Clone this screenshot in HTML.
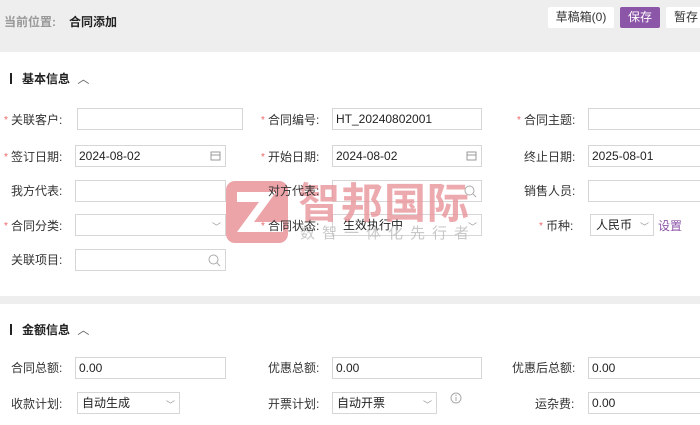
<!DOCTYPE html>
<html><head><meta charset="utf-8"><style>
*{margin:0;padding:0;box-sizing:border-box}
body{width:700px;height:425px;overflow:hidden;background:#fff;font-family:"Liberation Sans","Noto Sans CJK SC",sans-serif;font-size:12px;color:#333;position:relative}
.a{position:absolute}
.hdr{left:0;top:0;width:700px;height:52px;background:#eeeeee}
.btn{position:absolute;top:7px;height:21px;background:#fff;border-radius:2px;font-size:12px;line-height:21px;text-align:center;color:#333}
.band{left:0;top:296px;width:700px;height:8px;background:#eeeeee}
.lbl{position:absolute;font-size:12px;color:#333;line-height:14px;white-space:nowrap;z-index:3}
.req::before{content:"*";color:#e66;font-size:10px;position:absolute;left:-7px;top:1px}
.inp{position:absolute;height:22px;border:1px solid #d6d6d6;background:#fff;font-size:12px;line-height:20px;padding-left:3px;color:#222}
.sel{padding-left:10px}
.ttl{position:absolute;left:10px;font-weight:bold;font-size:12px;color:#222}
.ttl::before{content:"";display:inline-block;width:2px;height:11px;background:#222;margin-right:10px;vertical-align:-1px}
.ic{position:absolute;right:4px;top:4px}
</style></head><body>
<div class="a hdr"></div>
<div class="a" style="left:4px;top:13px;color:#999;font-weight:bold">当前位置:</div>
<div class="a" style="left:69px;top:13px;color:#222;font-weight:bold">合同添加</div>
<div class="btn" style="left:548px;width:66px">草稿箱(0)</div>
<div class="btn" style="left:620px;width:40px;background:#8b55a8;color:#fff">保存</div>
<div class="btn" style="left:666px;width:40px">暂存</div>

<div class="ttl" style="top:70px">基本信息 <span style="font-weight:normal;color:#666;margin-left:4px">︿</span></div>

<div class="lbl req" style="left:11px;top:113px">关联客户:</div>
<div class="inp" style="left:77px;top:108px;width:166px"></div>
<div class="lbl req" style="left:268px;top:113px">合同编号:</div>
<div class="inp" style="left:332px;top:108px;width:150px">HT_20240802001</div>
<div class="lbl req" style="left:524px;top:113px">合同主题:</div>
<div class="inp" style="left:588px;top:108px;width:120px"></div>

<div class="lbl req" style="left:11px;top:150px">签订日期:</div>
<div class="inp" style="left:75px;top:145px;width:151px">2024-08-02<svg class="ic" width="11" height="11" viewBox="0 0 11 11"><rect x="1" y="2" width="9" height="8" fill="none" stroke="#999"/><line x1="1" y1="5" x2="10" y2="5" stroke="#999"/></svg></div>
<div class="lbl req" style="left:268px;top:150px">开始日期:</div>
<div class="inp" style="left:332px;top:145px;width:150px">2024-08-02<svg class="ic" width="11" height="11" viewBox="0 0 11 11"><rect x="1" y="2" width="9" height="8" fill="none" stroke="#999"/><line x1="1" y1="5" x2="10" y2="5" stroke="#999"/></svg></div>
<div class="lbl" style="left:524px;top:150px">终止日期:</div>
<div class="inp" style="left:588px;top:145px;width:120px">2025-08-01</div>

<div class="lbl" style="left:11px;top:184px">我方代表:</div>
<div class="inp" style="left:75px;top:180px;width:151px"></div>
<div class="lbl" style="left:268px;top:184px">对方代表:</div>
<div class="inp" style="left:332px;top:180px;width:150px"><svg class="ic" width="13" height="13" viewBox="0 0 13 13"><circle cx="5.5" cy="5.5" r="4.5" fill="none" stroke="#aaa"/><line x1="9" y1="9" x2="12" y2="12" stroke="#aaa"/></svg></div>
<div class="lbl" style="left:524px;top:184px">销售人员:</div>
<div class="inp" style="left:588px;top:180px;width:120px"></div>

<div class="lbl req" style="left:11px;top:219px">合同分类:</div>
<div class="inp" style="left:75px;top:214px;width:151px"><span class="ic" style="color:#999;font-size:9px;top:2px">﹀</span></div>
<div class="lbl req" style="left:268px;top:219px">合同状态:</div>
<div class="inp sel" style="left:332px;top:214px;width:150px">生效执行中<span class="ic" style="color:#999;font-size:9px;top:2px">﹀</span></div>
<div class="lbl req" style="left:546px;top:219px">币种:</div>
<div class="inp sel" style="left:590px;top:214px;width:64px;padding-left:5px">人民币<span class="ic" style="color:#999;font-size:9px;top:2px">﹀</span></div>
<div class="lbl" style="left:658px;top:219px;color:#8b55a8">设置</div>

<div class="lbl" style="left:11px;top:253px">关联项目:</div>
<div class="inp" style="left:75px;top:249px;width:151px"><svg class="ic" width="13" height="13" viewBox="0 0 13 13"><circle cx="5.5" cy="5.5" r="4.5" fill="none" stroke="#aaa"/><line x1="9" y1="9" x2="12" y2="12" stroke="#aaa"/></svg></div>

<div class="a band"></div>
<div class="ttl" style="top:321px">金额信息 <span style="font-weight:normal;color:#666;margin-left:4px">︿</span></div>

<div class="lbl" style="left:11px;top:361px">合同总额:</div>
<div class="inp" style="left:75px;top:357px;width:151px">0.00</div>
<div class="lbl" style="left:268px;top:361px">优惠总额:</div>
<div class="inp" style="left:332px;top:357px;width:150px">0.00</div>
<div class="lbl" style="left:512px;top:361px">优惠后总额:</div>
<div class="inp" style="left:588px;top:357px;width:120px">0.00</div>

<div class="lbl" style="left:11px;top:397px">收款计划:</div>
<div class="inp sel" style="left:77px;top:392px;width:103px;padding-left:4px">自动生成<span class="ic" style="color:#999;font-size:9px;top:2px">﹀</span></div>
<div class="lbl" style="left:268px;top:397px">开票计划:</div>
<div class="inp sel" style="left:332px;top:392px;width:105px;padding-left:4px">自动开票<span class="ic" style="color:#999;font-size:9px;top:2px">﹀</span></div>
<svg class="a" style="left:450px;top:392px" width="12" height="12" viewBox="0 0 12 12"><circle cx="6" cy="6" r="5" fill="none" stroke="#aaa"/><line x1="6" y1="5" x2="6" y2="9" stroke="#aaa"/><circle cx="6" cy="3.3" r=".7" fill="#aaa"/></svg>
<div class="lbl" style="left:535px;top:397px">运杂费:</div>
<div class="inp" style="left:588px;top:392px;width:120px">0.00</div>

<svg class="a" style="left:226px;top:181px;opacity:.85;z-index:2" width="62" height="62" viewBox="0 0 62 62"><rect width="62" height="62" rx="9" fill="#e9959b"/><path d="M11 11H50L28 41H57V51H11L33 21H11Z" fill="#fff"/></svg>
<div class="a" style="left:298px;top:176px;font-size:42px;line-height:50px;color:#e9959b;opacity:.8;font-weight:bold;letter-spacing:1px;font-family:'Noto Sans CJK SC',sans-serif;z-index:2">智邦国际</div>
<div class="a" style="left:300px;top:224px;font-size:15px;line-height:18px;color:#bbb;opacity:.8;letter-spacing:7px;font-family:'Noto Sans CJK SC',sans-serif;z-index:2">数智一体化先行者</div>
</body></html>
